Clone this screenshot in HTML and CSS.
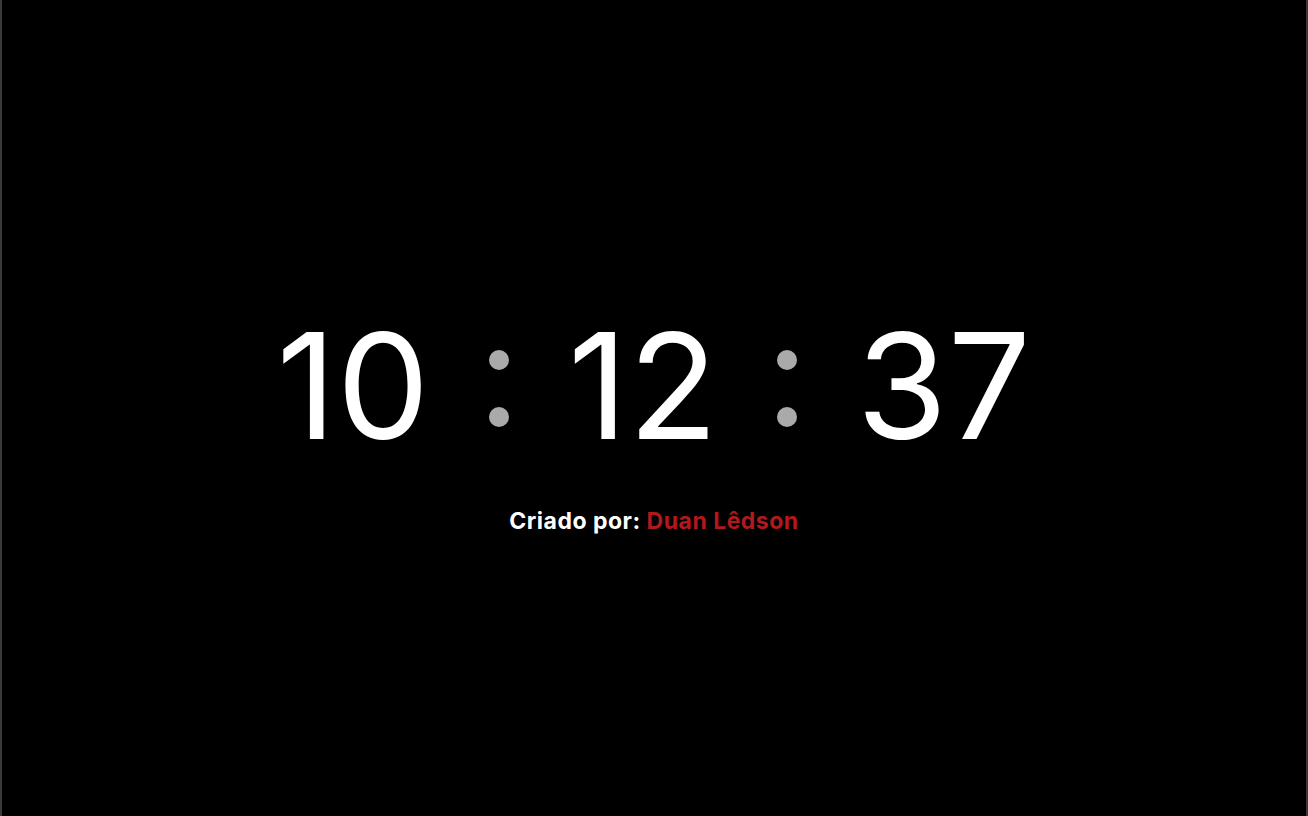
FILE: index.html
```html
<!DOCTYPE html>
<html lang="pt-BR">
<head>
<meta charset="utf-8">
<title>Relógio</title>
<link rel="stylesheet" href="styles.css">
</head>
<body>
<main class="page">
  <div class="clock">
    <span class="unit">10</span>
    <span class="sep"><i class="dot"></i><i class="dot"></i></span>
    <span class="unit">12</span>
    <span class="sep"><i class="dot"></i><i class="dot"></i></span>
    <span class="unit">37</span>
  </div>
  <p class="credit">Criado por: <span class="author">Duan Lêdson</span></p>
</main>
</body>
</html>
```
FILE: styles.css
```css
* { box-sizing: border-box; }
html, body { margin: 0; height: 100%; background: #000; }
body {
  font-family: Inter, "Noto Sans", sans-serif;
  border-left: 2px solid #3a3a3a;
  border-right: 2px solid #3a3a3a;
}
.page {
  height: 100%;
  display: flex;
  flex-direction: column;
  align-items: center;
  justify-content: center;
  padding-top: 30px;
}
.clock {
  display: flex;
  align-items: center;
  gap: 59px;
  color: #fff;
  font-size: 147px;
  font-weight: 400;
  line-height: 1;
}
.unit { display: block; letter-spacing: 0.5px; }
.sep {
  display: flex;
  flex-direction: column;
  gap: 37px;
  padding-top: 6px;
}
.dot {
  display: block;
  width: 20px;
  height: 20px;
  border-radius: 50%;
  background: #aaa;
}
.credit {
  margin: 48px 0 0;
  color: #fff;
  font-size: 23px;
  font-weight: 700;
  letter-spacing: 0.5px;
  line-height: 28px;
}
.author { color: #b3181d; }
```
